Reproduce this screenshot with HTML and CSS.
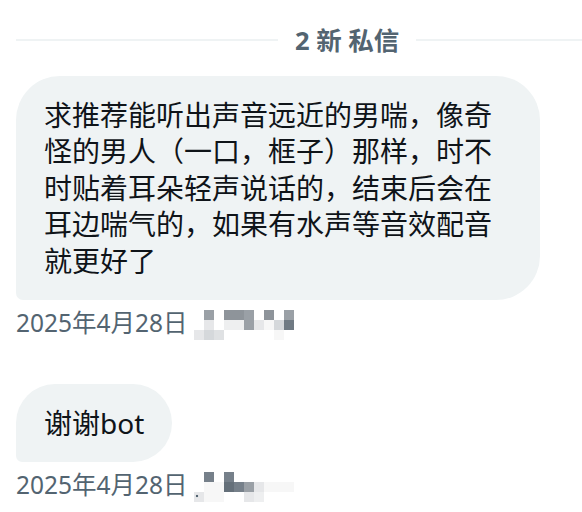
FILE: index.html
```html
<!DOCTYPE html>
<html lang="zh-CN">
<head>
    <meta charset="UTF-8">
    <meta name="viewport" content="width=device-width, initial-scale=1.0">
    <title>私信</title>
    <link rel="stylesheet" href="styles.css">
</head>
<body>
    <div class="thread">
        <div class="divider">
            <span class="rule rule-left"></span>
            <span class="divider-text">2 新 私信</span>
            <span class="rule rule-right"></span>
        </div>

        <div class="msg">
            <div class="bubble">求推荐能听出声音远近的男喘，像奇怪的男人（一口，框子）那样，时不时贴着耳朵轻声说话的，结束后会在耳边喘气的，如果有水声等音效配音就更好了</div>
            <div class="meta">
                <span class="time">2025年4月28日</span>
                <div class="mosaic">
                    <span></span><span class="k5"></span><span></span><span class="k4"></span><span class="k4"></span><span class="k5"></span><span></span><span class="k4"></span><span></span><span class="k5"></span>
                    <span></span><span class="k8"></span><span></span><span class="k9"></span><span class="k9"></span><span class="k5"></span><span class="k8"></span><span class="k10"></span><span class="k6"></span><span class="k2"></span>
                    <span class="k8"></span><span class="k6"></span><span class="k7"></span><span></span><span></span><span></span><span></span><span></span><span class="k10"></span><span></span>
                </div>
            </div>
        </div>

        <div class="msg">
            <div class="bubble">谢谢bot</div>
            <div class="meta">
                <span class="time">2025年4月28日</span>
                <div class="mosaic">
                    <span></span><span class="k3"></span><span></span><span class="k3"></span><span></span><span></span><span></span><span></span><span></span><span></span>
                    <span></span><span class="k10"></span><span class="k10"></span><span class="k1"></span><span class="k3"></span><span class="k5"></span><span class="k8"></span><span class="k10"></span><span class="k10"></span><span class="k10"></span>
                    <span class="k8 dot"></span><span class="k10"></span><span class="k10"></span><span></span><span></span><span class="k8"></span><span class="k9"></span><span></span><span></span><span></span>
                </div>
            </div>
        </div>
    </div>
</body>
</html>
```

FILE: styles.css
```css
body {
    margin: 0;
    background: #fff;
    font-family: "Noto Sans", "Noto Sans CJK SC", sans-serif;
    color: #0f1419;
}
.thread {
    padding: 25px 0 0 16px;
}

/* 顶部分隔线 */
.divider {
    display: flex;
    align-items: center;
    gap: 17px;
    line-height: 30px;
}
.rule {
    height: 2px;
    background: #eff3f4;
}
.rule-left {
    width: 262px;
}
.rule-right {
    flex: 1;
}
.divider-text {
    font-size: 25.5px;
    font-weight: 700;
    color: #536471;
}

.msg {
    margin-top: 44px;
}
.divider + .msg {
    margin-top: 21px;
}
.bubble {
    display: inline-block;
    box-sizing: border-box;
    max-width: 524px;
    padding: 21px 36px 21px 28px;
    font-size: 28px;
    line-height: 36.4px;
    background: #eff3f4;
    border-radius: 44px 44px 44px 7px;
}
.msg:last-child .bubble {
    padding-right: 28px;
}

.meta {
    display: flex;
    align-items: flex-start;
    margin-top: 8px;
    line-height: 30px;
}
.time {
    font-size: 24.5px;
    color: #536471;
}

/* 打码的用户名 */
.mosaic {
    display: grid;
    grid-template-columns: repeat(10, 10px);
    grid-template-rows: repeat(3, 10px);
    margin: 2px 0 0 6px;
}
.mosaic .k1 { background: #65707a; }
.mosaic .k2 { background: #6f7a83; }
.mosaic .k3 { background: #76808a; }
.mosaic .k4 { background: #8e949a; }
.mosaic .k5 { background: #9aa0a6; }
.mosaic .k6 { background: #d5d8db; }
.mosaic .k7 { background: #dfe1e3; }
.mosaic .k8 { background: #e6e7e9; }
.mosaic .k9 { background: #eeeff0; }
.mosaic .k10 { background: #f7f7f7; }
.mosaic .dot {
    background: radial-gradient(circle at 3px 4px, #536471 1.2px, #e6e7e9 1.6px);
}
```
